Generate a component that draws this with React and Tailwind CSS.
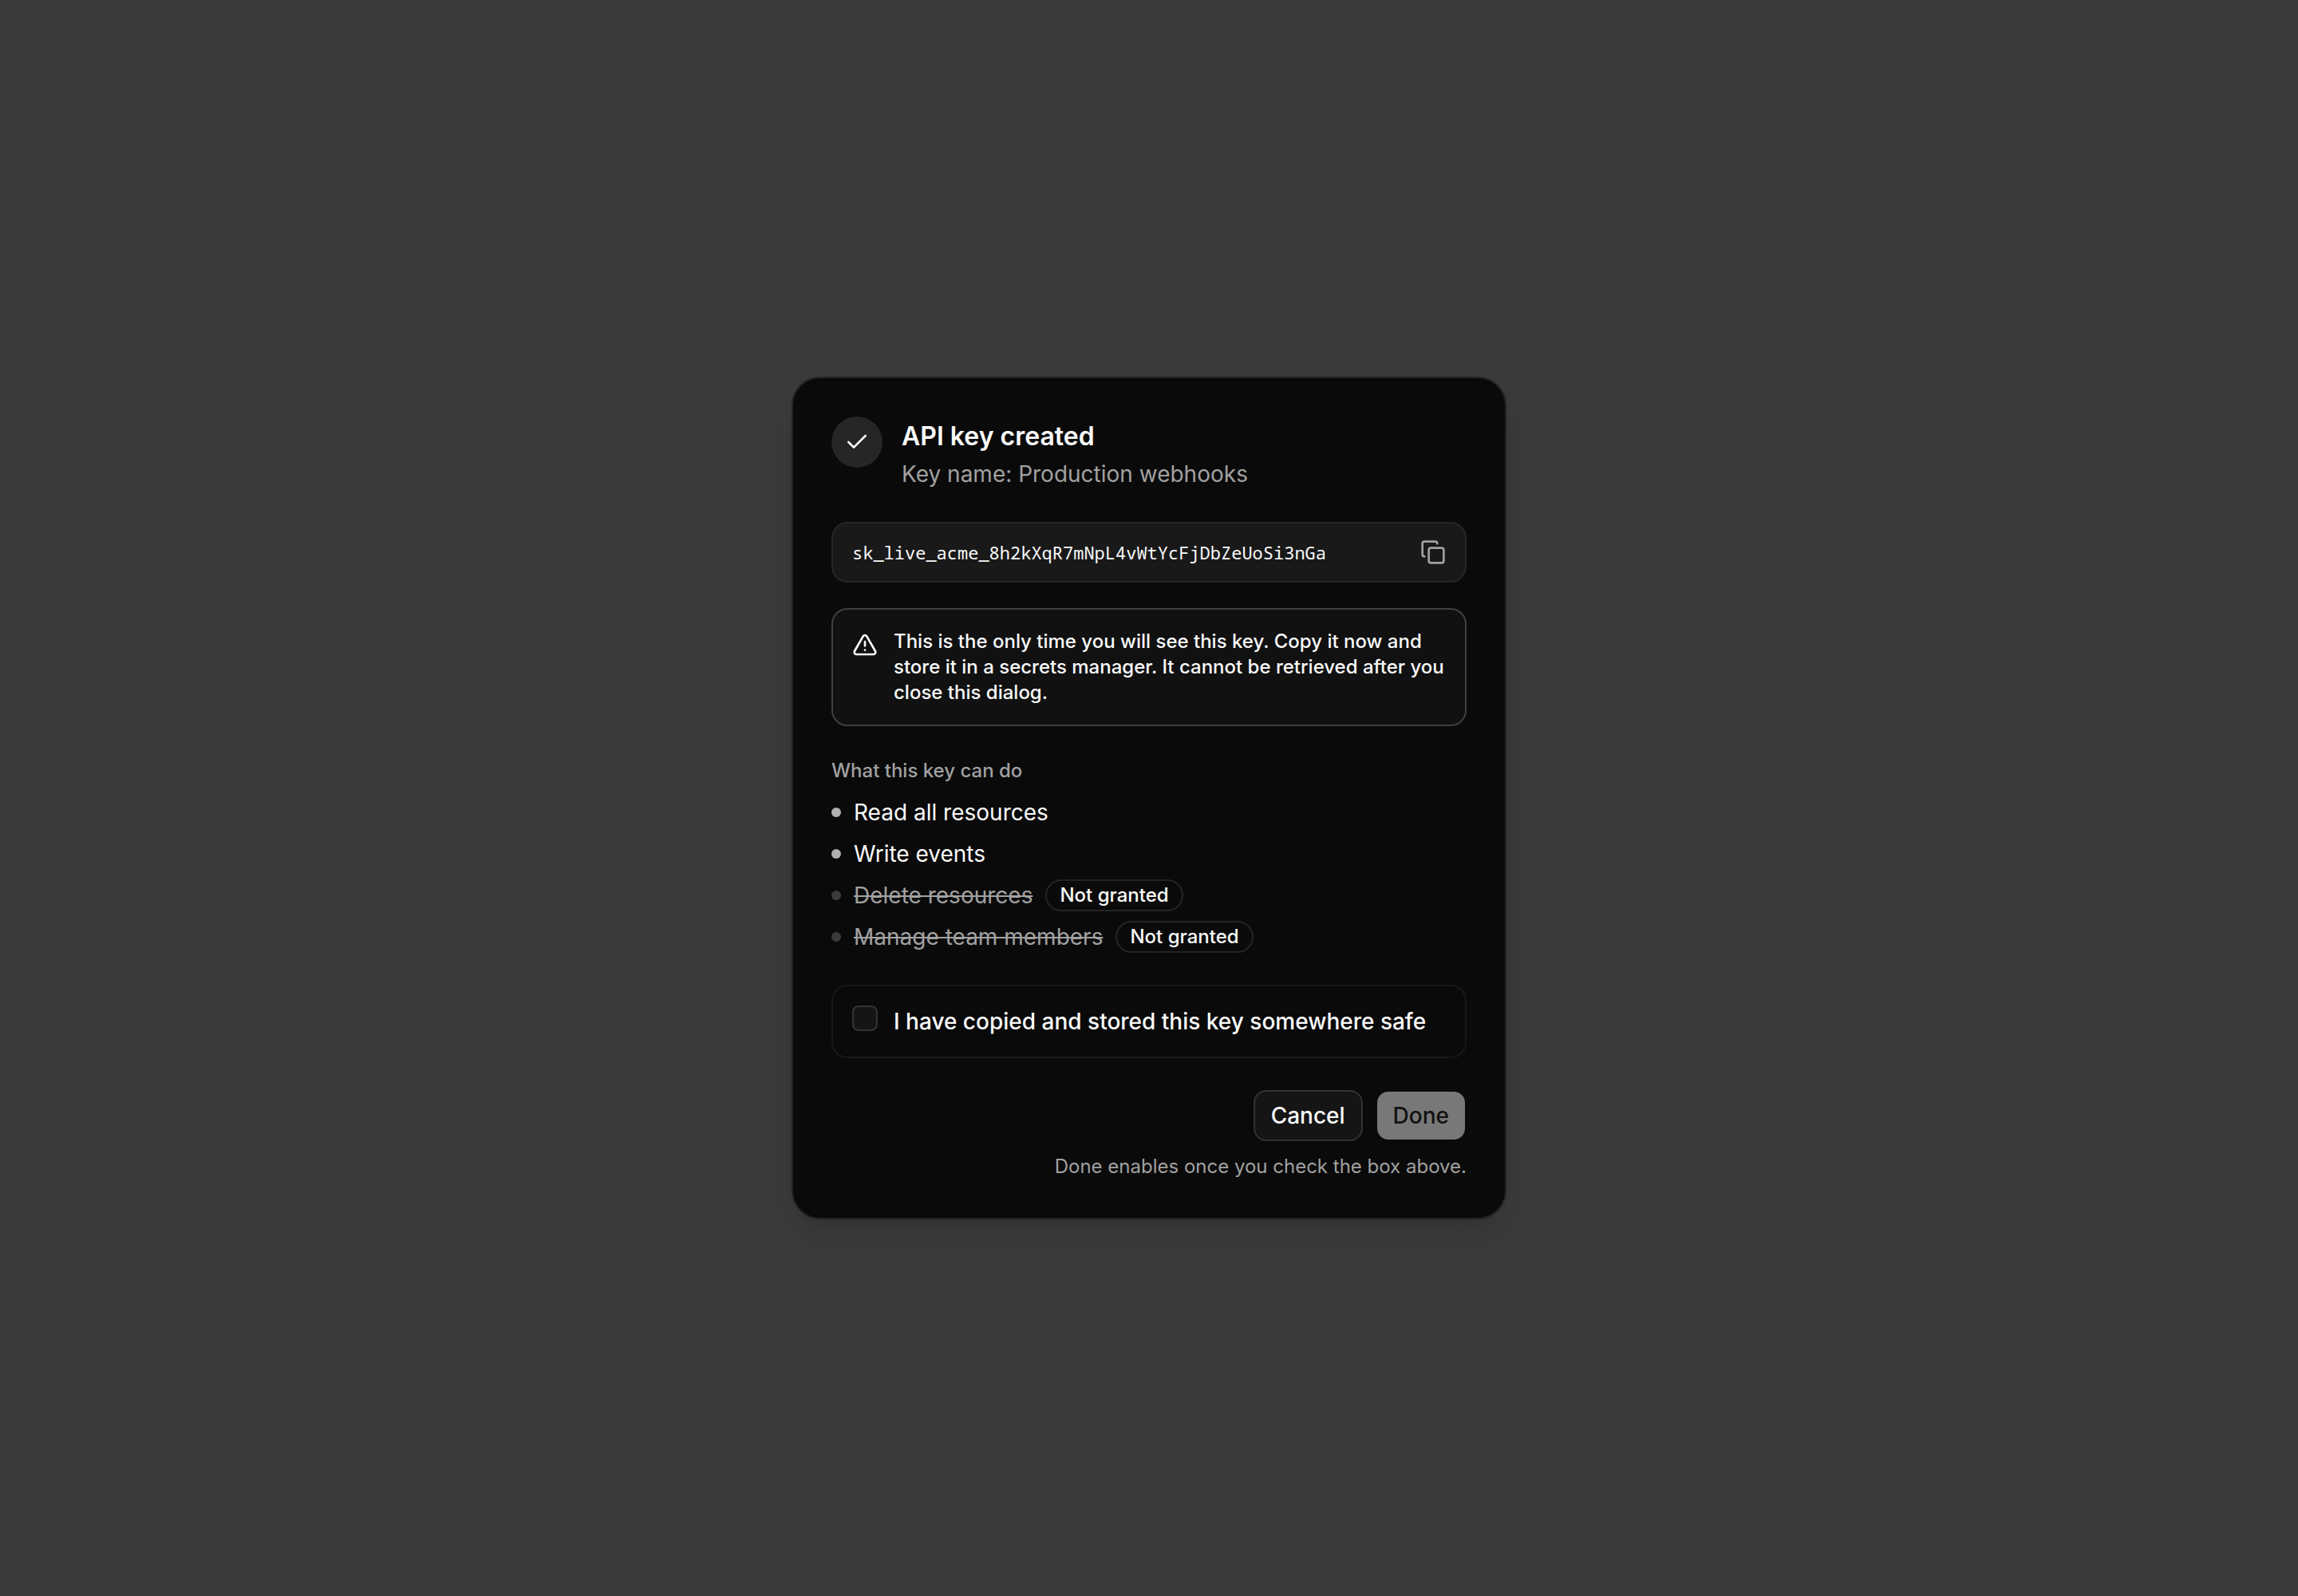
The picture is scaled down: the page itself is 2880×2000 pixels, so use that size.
import React, { useState } from "react";
import { Check, Copy, TriangleAlert } from "lucide-react";

const API_KEY = "sk_live_acme_8h2kXqR7mNpL4vWtYcFjDbZeUoSi3nGa";

const scopes = [
    { label: "Read all resources", granted: true },
    { label: "Write events", granted: true },
    { label: "Delete resources", granted: false },
    { label: "Manage team members", granted: false },
];

function ScopeItem({ label, granted }) {
    return (
        <li className="flex items-center gap-4 text-[28px] leading-10">
            <span
                aria-hidden="true"
                className={
                    granted
                        ? "size-3 shrink-0 rounded-full bg-[#b0b0b0]"
                        : "size-3 shrink-0 rounded-full bg-[#3b3b3b]"
                }
            />
            <span className={granted ? "" : "text-[#a1a1a1] line-through"}>
                {label}
            </span>
            {!granted && (
                <span className="flex h-10 items-center rounded-full border-2 border-[#242424] px-4 text-2xl font-medium">
                    Not granted
                </span>
            )}
        </li>
    );
}

export default function App() {
    const [stored, setStored] = useState(false);

    const handleCopy = () => {
        navigator.clipboard?.writeText(API_KEY);
    };

    return (
        <div className="flex min-h-screen items-center justify-center bg-[#3a3a3a] font-['Inter',sans-serif] text-[#fafafa]">
            <div
                role="dialog"
                aria-labelledby="dialog-title"
                aria-describedby="dialog-description"
                className="flex w-full max-w-4xl flex-col gap-10 rounded-[36px] border-2 border-[#232323] bg-[#0a0a0a] p-12 shadow-[0_20px_30px_-6px_rgb(0_0_0/0.1),0_8px_12px_-8px_rgb(0_0_0/0.1)]"
            >
                <header className="flex items-start gap-6">
                    <div className="flex size-16 shrink-0 items-center justify-center rounded-full bg-[#262626]">
                        <Check size={32} />
                    </div>
                    <div className="flex flex-col gap-0.5">
                        <h2
                            id="dialog-title"
                            className="text-[32px] leading-[50px] font-semibold"
                        >
                            API key created
                        </h2>
                        <p
                            id="dialog-description"
                            className="text-[28px] leading-10 text-[#a1a1a1]"
                        >
                            Key name: Production webhooks
                        </p>
                    </div>
                </header>

                <div className="flex flex-col gap-8">
                    <div className="flex items-center justify-between rounded-[20px] border-2 border-[#262626] bg-[#191919] px-6 py-3">
                        <code className="font-['Noto_Sans_Mono','DejaVu_Sans_Mono',monospace] text-[22px] leading-8">
                            {API_KEY}
                        </code>
                        <button
                            type="button"
                            aria-label="Copy API key"
                            onClick={handleCopy}
                            className="flex h-12 items-center text-[#a1a1a1]"
                        >
                            <Copy size={32} />
                        </button>
                    </div>

                    <div
                        role="alert"
                        className="flex items-start gap-5 rounded-[20px] border-2 border-[#404040] bg-[#111111] p-6"
                    >
                        <TriangleAlert size={32} className="mt-1 shrink-0" />
                        <p className="text-2xl leading-8 font-medium">
                            This is the only time you will see this key. Copy
                            it now and store it in a secrets manager. It cannot
                            be retrieved after you close this dialog.
                        </p>
                    </div>
                </div>

                <section className="flex flex-col gap-4">
                    <h3 className="text-2xl leading-8 font-medium text-[#a1a1a1]">
                        What this key can do
                    </h3>
                    <ul className="flex flex-col gap-3">
                        {scopes.map((scope) => (
                            <ScopeItem key={scope.label} {...scope} />
                        ))}
                    </ul>
                </section>

                <label
                    htmlFor="stored"
                    className="flex items-start gap-5 rounded-[20px] border-2 border-[#191919] p-6"
                >
                    <input
                        id="stored"
                        type="checkbox"
                        checked={stored}
                        onChange={(e) => setStored(e.target.checked)}
                        className="size-8 shrink-0 appearance-none rounded-lg border-2 border-[#343434] bg-[#151515] shadow-sm checked:bg-[#e5e5e5]"
                    />
                    <span className="text-[28px] leading-10 font-medium">
                        I have copied and stored this key somewhere safe
                    </span>
                </label>

                <footer className="flex flex-col items-end gap-4">
                    <div className="flex gap-4">
                        <button
                            type="button"
                            className="h-16 rounded-2xl border-2 border-[#323232] bg-[#151515] px-5 text-[28px] font-medium shadow-sm"
                        >
                            Cancel
                        </button>
                        <button
                            type="button"
                            disabled={!stored}
                            className="h-16 rounded-2xl border-2 border-transparent bg-[#e5e5e5] bg-clip-padding px-5 text-[28px] font-medium text-[#171717] disabled:bg-[#787878] disabled:text-[#111111]"
                        >
                            Done
                        </button>
                    </div>
                    <p className="text-2xl leading-8 text-[#a1a1a1]">
                        Done enables once you check the box above.
                    </p>
                </footer>
            </div>
        </div>
    );
}
